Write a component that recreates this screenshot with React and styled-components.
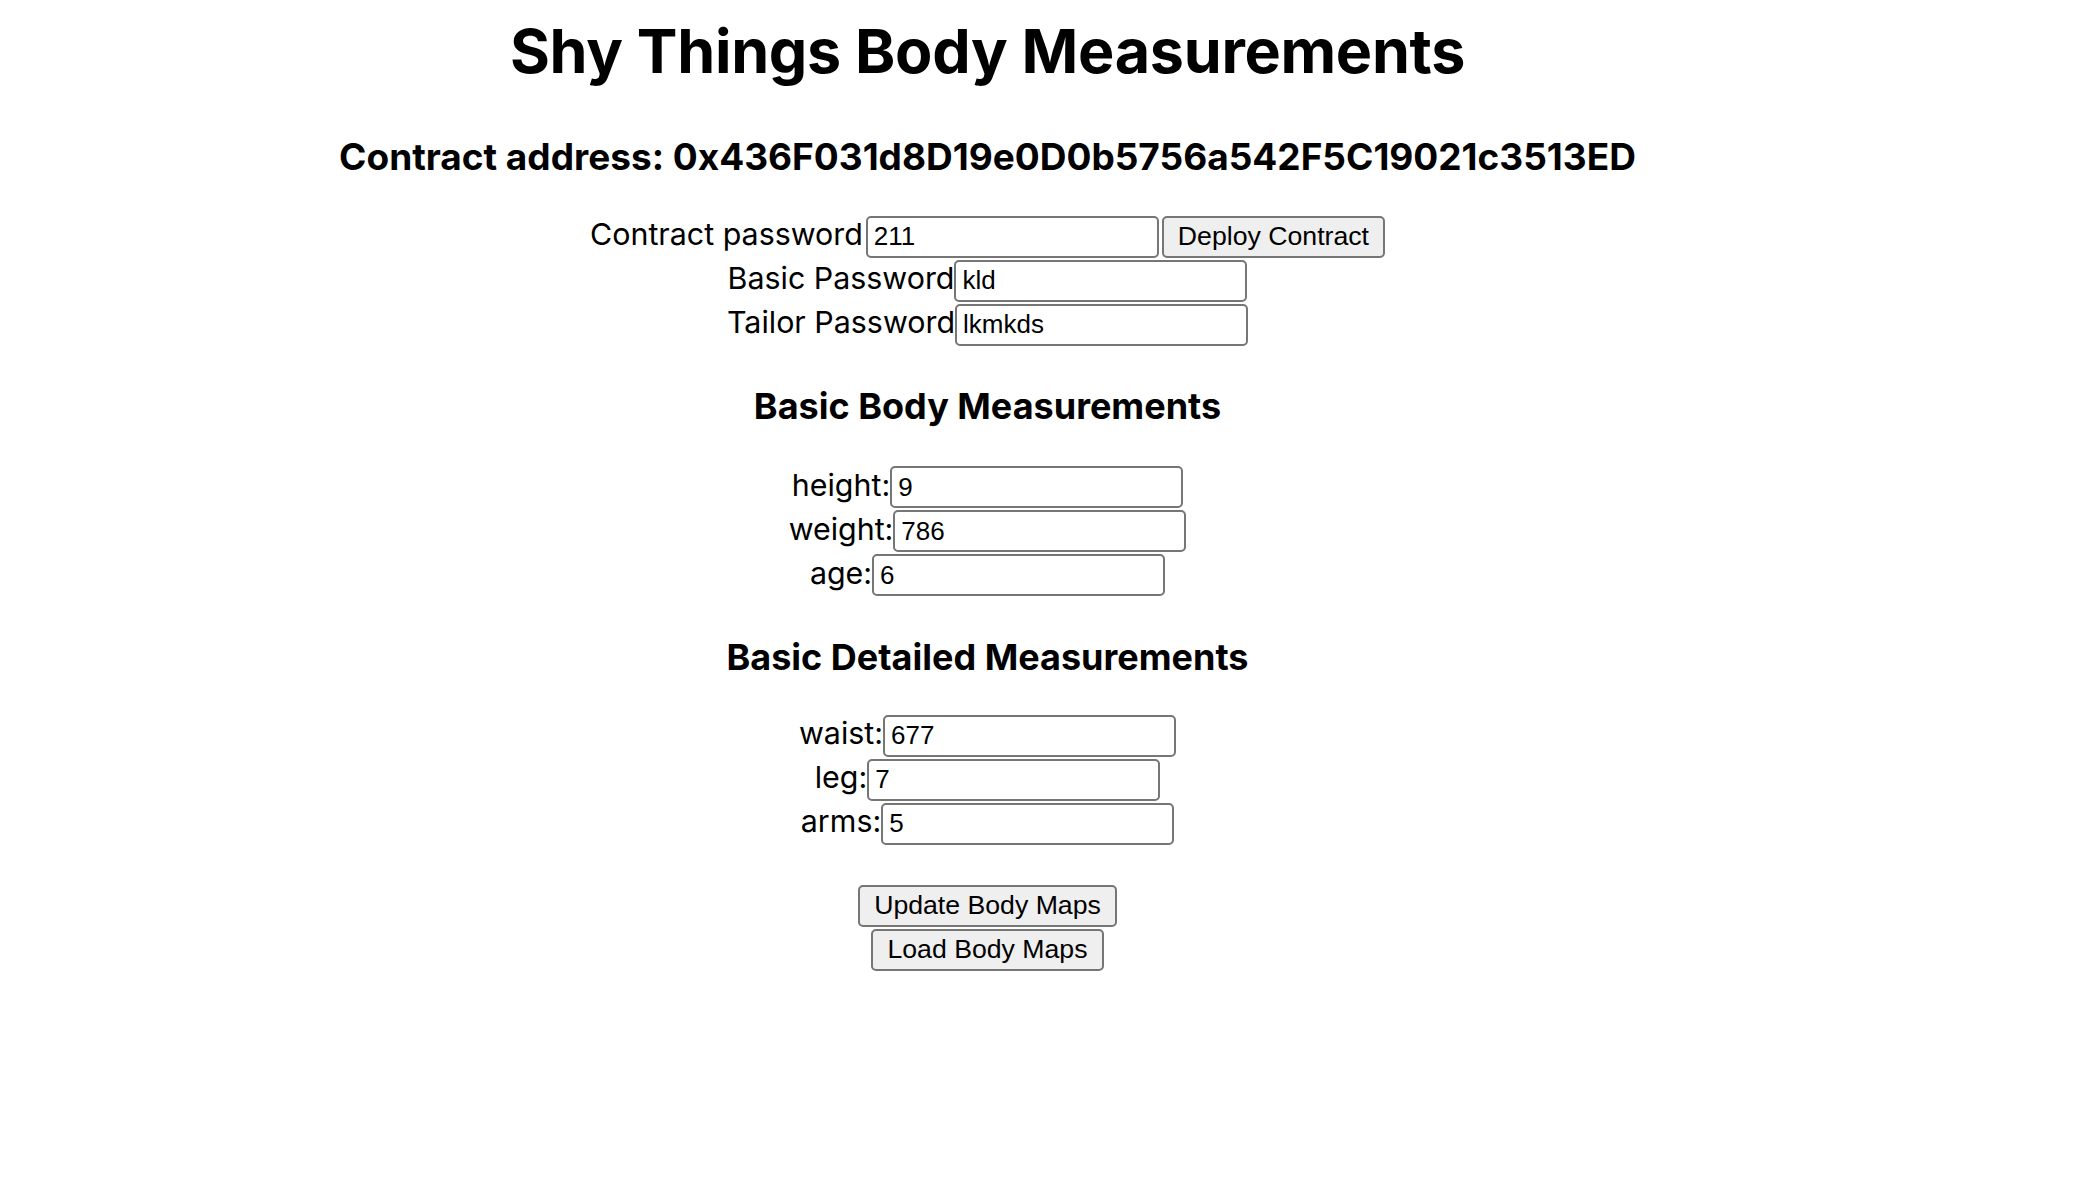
import React from "react";
import styled, { createGlobalStyle } from "styled-components";

const Global = createGlobalStyle`
  html, body { margin: 0; padding: 0; background: #ffffff; }
  body { font-family: Inter, "Noto Sans", sans-serif; color: #000; }
`;

const Page = styled.div`
  width: 1975px;
  display: flex;
  flex-direction: column;
  align-items: center;
`;

const Title = styled.h1`
  margin: 15px 0 0;
  font-size: 61px;
  font-weight: 700;
  line-height: 1.21;
  letter-spacing: -0.3px;
`;

const Address = styled.h2`
  margin: 46px 0 0;
  font-size: 37px;
  font-weight: 700;
  line-height: 1.21;
`;

const SectionTitle = styled.h3`
  margin: ${(p) => p.$top}px 0 0;
  font-size: 36px;
  font-weight: 700;
  line-height: 1.21;
`;

const Rows = styled.div`
  margin-top: ${(p) => p.$top}px;
  display: flex;
  flex-direction: column;
  align-items: center;
`;

const Row = styled.div`
  height: 44px;
  display: flex;
  align-items: baseline;
  gap: ${(p) => p.$gap || 0}px;
`;

const Label = styled.span`
  font-size: 30.4px;
  line-height: 1;
`;

const Input = styled.input`
  box-sizing: border-box;
  width: 293px;
  height: 42px;
  margin: 0;
  padding: 2px 6px;
  border: 2px solid #767676;
  border-radius: 5px;
  font-family: "Liberation Sans", Arial, sans-serif;
  font-size: 26px;
  color: #000;
  background: #fff;
  outline: none;
`;

const Button = styled.button`
  box-sizing: border-box;
  height: 42px;
  margin: 0;
  padding: 0 14px;
  border: 2px solid #767676;
  border-radius: 5px;
  background: #efefef;
  font-family: "Liberation Sans", Arial, sans-serif;
  font-size: 26.67px;
  color: #000;
  cursor: pointer;
`;

const ButtonStack = styled.div`
  margin-top: 38px;
  display: flex;
  flex-direction: column;
  align-items: center;
  gap: 2px;
`;

function Field({ label, value, children }) {
  return (
    <Row $gap={children ? 3 : 0}>
      <Label>{label}</Label>
      <Input type="text" defaultValue={value} />
      {children}
    </Row>
  );
}

export default function App() {
  return (
    <>
      <Global />
      <Page>
        <Title>Shy Things Body Measurements</Title>
        <Address>Contract address: 0x436F031d8D19e0D0b5756a542F5C19021c3513ED</Address>
        <Rows $top={36}>
          <Field label="Contract password" value="211">
            <Button>Deploy Contract</Button>
          </Field>
          <Field label="Basic Password" value="kld" />
          <Field label="Tailor Password" value="lkmkds" />
        </Rows>
        <SectionTitle $top={37}>Basic Body Measurements</SectionTitle>
        <Rows $top={38}>
          <Field label="height:" value="9" />
          <Field label="weight:" value="786" />
          <Field label="age:" value="6" />
        </Rows>
        <SectionTitle $top={38}>Basic Detailed Measurements</SectionTitle>
        <Rows $top={35}>
          <Field label="waist:" value="677" />
          <Field label="leg:" value="7" />
          <Field label="arms:" value="5" />
        </Rows>
        <ButtonStack>
          <Button>Update Body Maps</Button>
          <Button>Load Body Maps</Button>
        </ButtonStack>
      </Page>
    </>
  );
}
